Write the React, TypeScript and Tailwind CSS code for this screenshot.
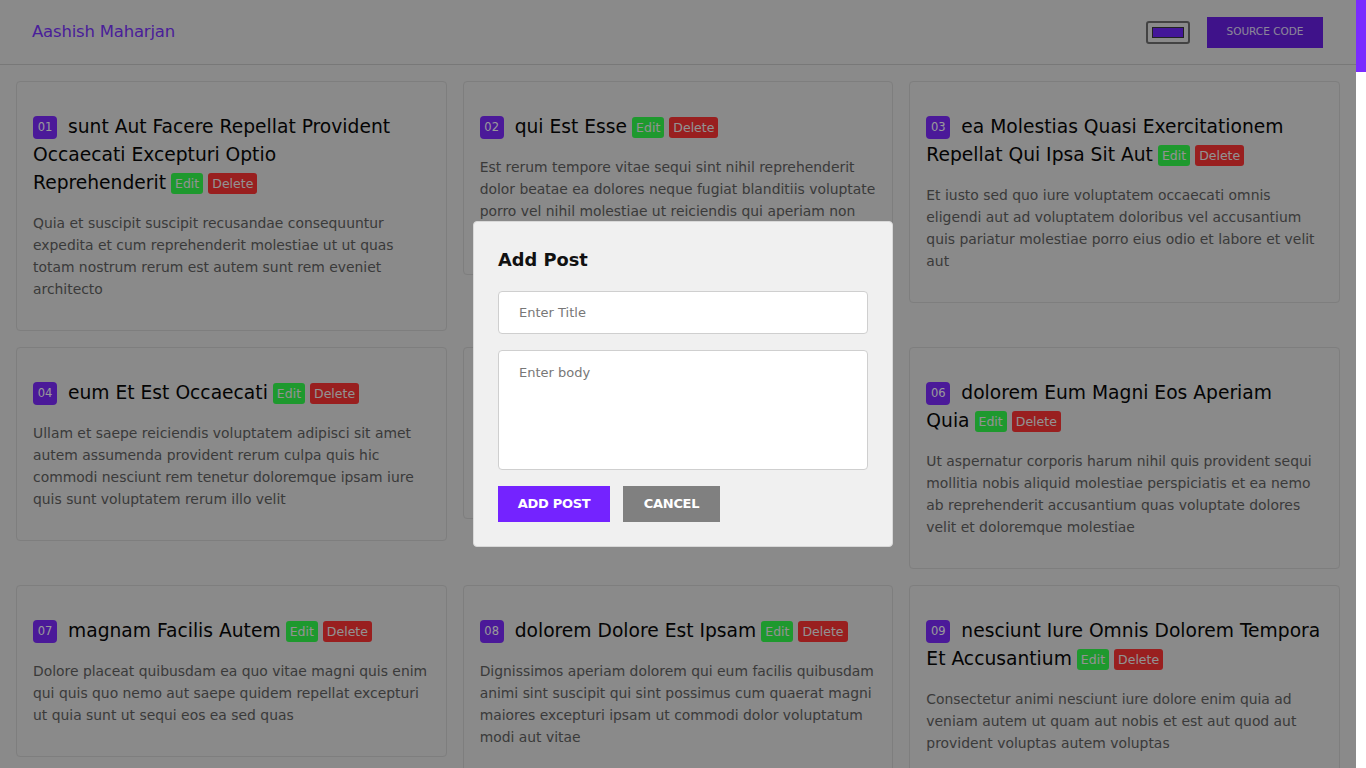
interface Post {
  id: number;
  title: string;
  body: string;
}

const posts: Post[] = [
  {
    id: 1,
    title: "sunt Aut Facere Repellat Provident Occaecati Excepturi Optio Reprehenderit",
    body: "Quia et suscipit suscipit recusandae consequuntur expedita et cum reprehenderit molestiae ut ut quas totam nostrum rerum est autem sunt rem eveniet architecto",
  },
  {
    id: 2,
    title: "qui Est Esse",
    body: "Est rerum tempore vitae sequi sint nihil reprehenderit dolor beatae ea dolores neque fugiat blanditiis voluptate porro vel nihil molestiae ut reiciendis qui aperiam non debitis possimus qui neque nisi nulla",
  },
  {
    id: 3,
    title: "ea Molestias Quasi Exercitationem Repellat Qui Ipsa Sit Aut",
    body: "Et iusto sed quo iure voluptatem occaecati omnis eligendi aut ad voluptatem doloribus vel accusantium quis pariatur molestiae porro eius odio et labore et velit aut",
  },
  {
    id: 4,
    title: "eum Et Est Occaecati",
    body: "Ullam et saepe reiciendis voluptatem adipisci sit amet autem assumenda provident rerum culpa quis hic commodi nesciunt rem tenetur doloremque ipsam iure quis sunt voluptatem rerum illo velit",
  },
  {
    id: 5,
    title: "nesciunt Quas Odio",
    body: "Repudiandae veniam quaerat sunt sed alias aut fugiat sit autem sed est voluptatem omnis possimus esse voluptatibus quis est aut tenetur dolor neque",
  },
  {
    id: 6,
    title: "dolorem Eum Magni Eos Aperiam Quia",
    body: "Ut aspernatur corporis harum nihil quis provident sequi mollitia nobis aliquid molestiae perspiciatis et ea nemo ab reprehenderit accusantium quas voluptate dolores velit et doloremque molestiae",
  },
  {
    id: 7,
    title: "magnam Facilis Autem",
    body: "Dolore placeat quibusdam ea quo vitae magni quis enim qui quis quo nemo aut saepe quidem repellat excepturi ut quia sunt ut sequi eos ea sed quas",
  },
  {
    id: 8,
    title: "dolorem Dolore Est Ipsam",
    body: "Dignissimos aperiam dolorem qui eum facilis quibusdam animi sint suscipit qui sint possimus cum quaerat magni maiores excepturi ipsam ut commodi dolor voluptatum modi aut vitae",
  },
  {
    id: 9,
    title: "nesciunt Iure Omnis Dolorem Tempora Et Accusantium",
    body: "Consectetur animi nesciunt iure dolore enim quia ad veniam autem ut quam aut nobis et est aut quod aut provident voluptas autem voluptas",
  },
];

const font = "font-['DejaVu_Sans','Liberation_Sans',sans-serif]";

function PostCard({ post }: { post: Post }) {
  // keep the last word on the same line as the buttons
  const words = post.title.split(" ");
  const last = words.pop();
  const head = words.length ? words.join(" ") + " " : "";

  return (
    <div className="border border-[#d2d2d2] rounded px-4 pt-[31px] pb-[30px]">
      <h2 className="text-[18.7px] leading-[28px] text-[#080808]">
        <span className="inline-flex items-center justify-center w-6 h-[23px] rounded-[4px] bg-[#7d2aff] text-white text-[11.5px] align-[2px] mr-[11px]">
          {String(post.id).padStart(2, "0")}
        </span>
        {head}
        <span className="whitespace-nowrap">
          {last}
          <span className="inline-block ml-[5px] bg-[#33ff4d] text-[#f4f4f4] text-[12.5px] leading-[21px] px-[4px] rounded-[3px] align-[1px]">
            Edit
          </span>
          <span className="inline-block ml-[5px] bg-[#ff3434] text-[#f4f4f4] text-[12.5px] leading-[21px] px-[4px] rounded-[3px] align-[1px]">
            Delete
          </span>
        </span>
      </h2>
      <p className="mt-[15px] text-[13.9px] leading-[22px] text-[#626262]">{post.body}</p>
    </div>
  );
}

export default function App() {
  return (
    <div className={`${font} flex h-screen overflow-hidden`}>
      <div className="flex-1 min-w-0 bg-[#e6e6e6] overflow-hidden">
        <nav className="h-[65px] border-b border-[#c8c8c8] flex items-center justify-between pl-8 pr-[33px]">
          <span className="text-[16.5px] text-[#7b34ff] tracking-[-0.2px]">Aashish Maharjan</span>
          <div className="flex items-center gap-[17px]">
            <button className="w-11 h-[23px] border-2 border-[#707070] rounded-[3px] flex items-center justify-center">
              <span className="block w-8 h-[11px] bg-[#7126ff] border border-[#3a3a3a]" />
            </button>
            <button className="w-[116px] h-[31px] bg-[#6a1fe6] text-[#e8e0ff] text-[10.5px] uppercase">
              Source Code
            </button>
          </div>
        </nav>

        <main className="grid grid-cols-3 items-start gap-4 px-4 pt-4 pb-4">
          {posts.map((post) => (
            <PostCard key={post.id} post={post} />
          ))}
        </main>
      </div>

      {/* page scrollbar */}
      <div className="relative z-10 w-[10px] shrink-0 bg-white">
        <div className="h-[72px] bg-[#7a2bff]" />
      </div>

      <div className="fixed z-[5] top-0 left-0 w-screen h-screen bg-black/40 flex items-center justify-center">
        <div className="w-[420px] bg-[#f0f0f0] rounded px-6 pt-6 pb-6 border border-[#d8d8d8]">
          <h3 className="text-[17.8px] leading-[28px] font-bold text-[#111]">Add Post</h3>
          <input
            placeholder="Enter Title"
            className="mt-[17px] w-full h-[43px] bg-white border border-[#cfcfcf] rounded px-5 text-[13px] placeholder:text-[#777] outline-none"
          />
          <textarea
            placeholder="Enter body"
            className="mt-4 block w-full h-[120px] bg-white border border-[#cfcfcf] rounded px-5 py-[12px] text-[13px] placeholder:text-[#777] outline-none resize-none"
          />
          <div className="mt-4 flex gap-[13px]">
            <button className="w-[112px] h-9 bg-[#7423ff] text-white text-[13px] font-bold uppercase tracking-[-0.3px]">
              Add Post
            </button>
            <button className="w-[97px] h-9 bg-[#808080] text-white text-[13px] font-bold uppercase tracking-[-0.3px]">
              Cancel
            </button>
          </div>
        </div>
      </div>
    </div>
  );
}
